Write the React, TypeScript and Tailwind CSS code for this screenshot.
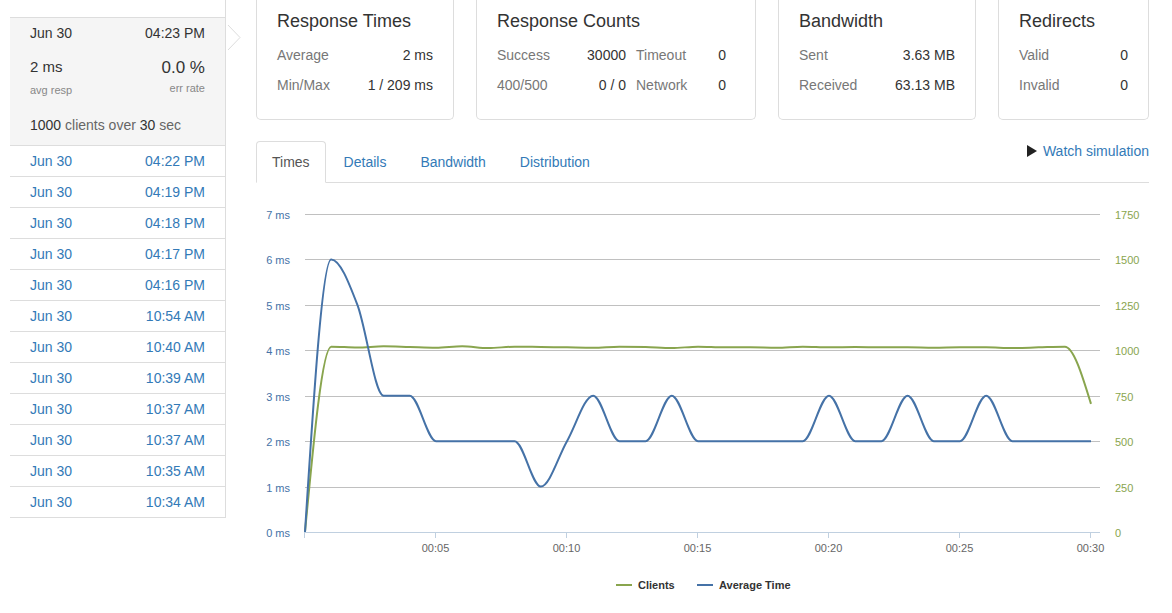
import React from "react";

const recent = [
  "04:22 PM",
  "04:19 PM",
  "04:18 PM",
  "04:17 PM",
  "04:16 PM",
  "10:54 AM",
  "10:40 AM",
  "10:39 AM",
  "10:37 AM",
  "10:37 AM",
  "10:35 AM",
  "10:34 AM",
];

const avgTime = [0, 6, 5, 3, 3, 2, 2, 2, 2, 1, 2, 3, 2, 2, 3, 2, 2, 2, 2, 2, 3, 2, 2, 3, 2, 2, 3, 2, 2, 2, 2];
const clients = [
  0, 1020, 1015, 1022, 1018, 1014, 1022, 1012, 1020, 1018, 1016, 1014, 1020, 1018, 1012, 1020, 1016, 1016, 1014, 1020,
  1016, 1018, 1016, 1016, 1014, 1016, 1016, 1012, 1016, 1020, 705,
];

// chart geometry (svg coords)
const X0 = 49;
const PX_SEC = 26.2;
const Y0 = 347;
const PX_MS = 45.43;

const sx = (t: number) => X0 + t * PX_SEC;

function monotone(pts: [number, number][]) {
  const n = pts.length;
  const t: number[] = new Array(n).fill(0);
  for (let i = 1; i < n - 1; i++) {
    const h0 = pts[i][0] - pts[i - 1][0];
    const h1 = pts[i + 1][0] - pts[i][0];
    const s0 = (pts[i][1] - pts[i - 1][1]) / h0;
    const s1 = (pts[i + 1][1] - pts[i][1]) / h1;
    const p = (s0 * h1 + s1 * h0) / (h0 + h1);
    t[i] = (Math.sign(s0) + Math.sign(s1)) * Math.min(Math.abs(s0), Math.abs(s1), 0.5 * Math.abs(p)) || 0;
  }
  const hA = pts[1][0] - pts[0][0];
  t[0] = (3 * (pts[1][1] - pts[0][1]) / hA - t[1]) / 2;
  const hB = pts[n - 1][0] - pts[n - 2][0];
  t[n - 1] = (3 * (pts[n - 1][1] - pts[n - 2][1]) / hB - t[n - 2]) / 2;
  let d = `M${pts[0][0]},${pts[0][1]}`;
  for (let i = 0; i < n - 1; i++) {
    const [x0, y0] = pts[i];
    const [x1, y1] = pts[i + 1];
    const dx = (x1 - x0) / 3;
    d += `C${x0 + dx},${y0 + dx * t[i]},${x1 - dx},${y1 - dx * t[i + 1]},${x1},${y1}`;
  }
  return d;
}

function Chart() {
  const bluePath = monotone(avgTime.map((v, i) => [sx(i), Y0 - v * PX_MS]));
  const greenPath = monotone(clients.map((v, i) => [sx(i), Y0 - (v / 250) * PX_MS]));
  const rows = [0, 1, 2, 3, 4, 5, 6, 7];
  const ticks = [0, 5, 10, 15, 20, 25, 30];

  return (
    <svg width={893} height={420} className="block mt-[2px]" fontFamily="'Liberation Sans', Arial, sans-serif">
      {rows.map((r) => {
        const y = Math.round(Y0 - r * PX_MS) + 0.5;
        return (
          <g key={r}>
            {r > 0 && <line x1={49} x2={844} y1={y} y2={y} stroke="#c0c0c0" strokeWidth={1} />}
            <text x={34} y={y + 4} textAnchor="end" fontSize={11} fill="#4572a7">
              {r} ms
            </text>
            <text x={859} y={y + 4} fontSize={11} fill="#89a54e">
              {r * 250}
            </text>
          </g>
        );
      })}
      <line x1={49} x2={844} y1={Y0 + 0.5} y2={Y0 + 0.5} stroke="#c0d0e0" strokeWidth={1} />
      {ticks.map((s) => {
        const x = Math.round(sx(s)) - 0.5;
        return (
          <g key={s}>
            <line x1={x} x2={x} y1={Y0} y2={Y0 + 6} stroke="#c0d0e0" strokeWidth={1} />
            {s > 0 && (
              <text x={x} y={367} textAnchor="middle" fontSize={11} fill="#666">
                00:{String(s).padStart(2, "0")}
              </text>
            )}
          </g>
        );
      })}
      <path d={greenPath} fill="none" stroke="#89a54e" strokeWidth={2} strokeLinejoin="round" />
      <path d={bluePath} fill="none" stroke="#4572a7" strokeWidth={2} strokeLinejoin="round" />

      <g fontSize={11} fontWeight="bold" fill="#333">
        <line x1={360} x2={376} y1={400} y2={400} stroke="#89a54e" strokeWidth={2} />
        <text x={382} y={404}>Clients</text>
        <line x1={441} x2={457} y1={400} y2={400} stroke="#4572a7" strokeWidth={2} />
        <text x={463} y={404}>Average Time</text>
      </g>
    </svg>
  );
}

function Card({title, width, children}: {title: string; width: string; children: React.ReactNode}) {
  return (
    <div className={`${width} border border-t-0 border-[#dddddd] rounded-b-[5px] px-[20px] pt-[11px] pb-[19px] shrink-0`}>
      <h3 className="text-[18px] leading-[20px] text-[#333]">{title}</h3>
      <div className="mt-[9px] text-[14px] leading-[30px]">{children}</div>
    </div>
  );
}

function Row({label, value}: {label: string; value: string}) {
  return (
    <div className="flex justify-between">
      <span className="text-[#777]">{label}</span>
      <span className="text-[#333]">{value}</span>
    </div>
  );
}

export default function App() {
  return (
    <div className="flex bg-white text-[14px] text-[#333] font-['Liberation_Sans',Arial,sans-serif] min-h-[613px]">
      {/* history sidebar */}
      <div className="relative ml-[10px] w-[216px] border-r border-[#dddddd] pt-[17px] self-start">
        <div className="border-t border-[#dddddd]">
          <div className="bg-[#f5f5f5] border-b border-[#dddddd] px-[20px] pt-[5px] h-[128px]">
            <div className="flex justify-between leading-[20px]">
              <span>Jun 30</span>
              <span>04:23 PM</span>
            </div>
            <div className="flex justify-between items-start mt-[15px]">
              <div>
                <div className="text-[15px] leading-[18px]">2 ms</div>
                <div className="text-[11px] leading-[14px] text-[#888] mt-[7px]">avg resp</div>
              </div>
              <div className="text-right">
                <div className="text-[17px] leading-[20px]">0.0 %</div>
                <div className="text-[11px] leading-[14px] text-[#888] mt-[3px]">err rate</div>
              </div>
            </div>
            <div className="mt-[18px] leading-[20px] text-[#666]">
              <span className="text-[#333]">1000</span> clients over <span className="text-[#333]">30</span> sec
            </div>
          </div>
          {recent.map((time, i) => (
            <a
              key={i}
              href="#"
              className="flex justify-between h-[31px] items-center px-[20px] border-b border-[#dddddd] text-[#337ab7]"
            >
              <span>Jun 30</span>
              <span>{time}</span>
            </a>
          ))}
        </div>
        <svg className="absolute left-[217px] top-[24px]" width={15} height={28}>
          <polyline points="1,1 13,13.5 1,26" fill="none" stroke="#dddddd" strokeWidth={1} />
        </svg>
      </div>

      {/* main */}
      <div className="ml-[30px] w-[893px]">
        <div className="flex gap-[22px]">
          <Card title="Response Times" width="w-[198px]">
            <Row label="Average" value="2 ms" />
            <Row label="Min/Max" value="1 / 209 ms" />
          </Card>
          <Card title="Response Counts" width="w-[280px]">
            <div className="flex">
              <span className="w-[80px] text-[#777]">Success</span>
              <span className="w-[49px] text-right">30000</span>
              <span className="ml-[10px] w-[60px] text-[#777]">Timeout</span>
              <span className="w-[30px] text-right">0</span>
            </div>
            <div className="flex">
              <span className="w-[80px] text-[#777]">400/500</span>
              <span className="w-[49px] text-right">0 / 0</span>
              <span className="ml-[10px] w-[60px] text-[#777]">Network</span>
              <span className="w-[30px] text-right">0</span>
            </div>
          </Card>
          <Card title="Bandwidth" width="w-[198px]">
            <Row label="Sent" value="3.63 MB" />
            <Row label="Received" value="63.13 MB" />
          </Card>
          <Card title="Redirects" width="w-[151px]">
            <Row label="Valid" value="0" />
            <Row label="Invalid" value="0" />
          </Card>
        </div>

        <div className="mt-[21px] flex items-start border-b border-[#dddddd]">
          <div className="flex -mb-px">
            <a href="#" className="px-[15px] py-[10px] leading-[20px] border border-[#dddddd] border-b-white rounded-t-[4px] bg-white text-[#555] mr-[2px]">
              Times
            </a>
            <a href="#" className="px-[15px] py-[10px] leading-[20px] border border-transparent text-[#337ab7] mr-[2px]">
              Details
            </a>
            <a href="#" className="px-[15px] py-[10px] leading-[20px] border border-transparent text-[#337ab7] mr-[2px]">
              Bandwidth
            </a>
            <a href="#" className="px-[15px] py-[10px] leading-[20px] border border-transparent text-[#337ab7]">
              Distribution
            </a>
          </div>
          <a href="#" className="ml-auto mt-px flex items-center gap-[6px] text-[#337ab7] leading-[18px]">
            <svg width={10} height={12} className="block">
              <polygon points="0,0 10,6 0,12" fill="#222" />
            </svg>
            Watch simulation
          </a>
        </div>

        <Chart />
      </div>
    </div>
  );
}
